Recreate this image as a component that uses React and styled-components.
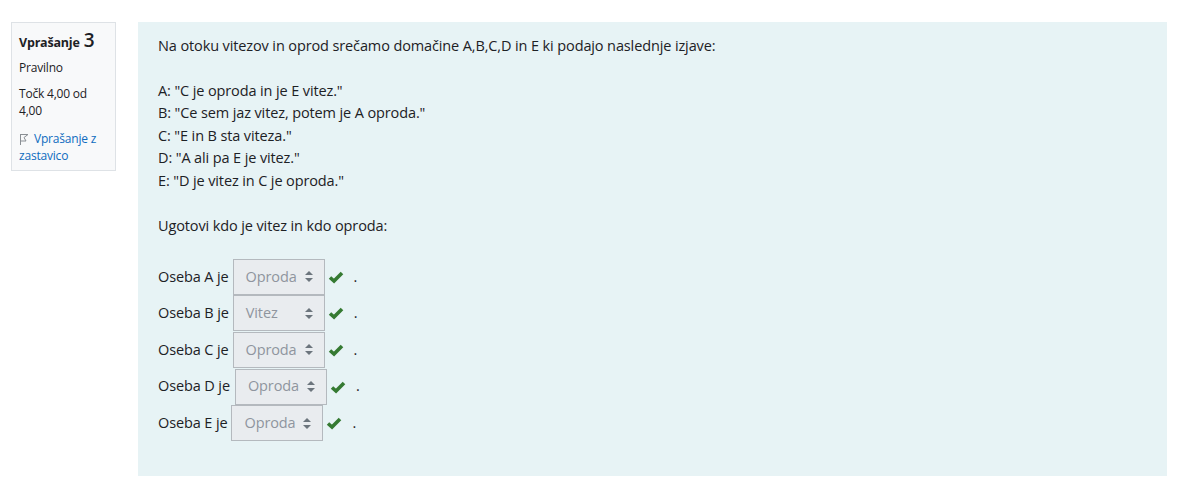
import React from "react";
import styled, { createGlobalStyle } from "styled-components";

const GlobalStyle = createGlobalStyle`
  body {
    margin: 0;
    background: #fff;
    font-family: "Open Sans", "Noto Sans", sans-serif;
    color: #1d2125;
  }
`;

const Page = styled.div`
  display: flex;
  align-items: flex-start;
  gap: 22px;
  padding: 22px 12px 15px 11px;
`;

const Info = styled.div`
  width: 105px;
  box-sizing: border-box;
  flex-shrink: 0;
  background: #f8f9fa;
  border: 1px solid #dee2e6;
  padding: 7px 7px 6px 7px;
  font-size: 12px;
  line-height: 17px;
  letter-spacing: -0.2px;
`;

const Title = styled.h3`
  margin: 0 0 6px;
  font-size: 12.5px;
  font-weight: 700;
  line-height: 20px;
  span {
    font-size: 19px;
    font-weight: 600;
    margin-left: 1px;
  }
`;

const InfoLine = styled.div`
  margin-bottom: 9px;
`;

const FlagLink = styled.a`
  display: block;
  margin-top: 11px;
  color: #0f6cbf;
  text-decoration: none;
  svg {
    vertical-align: -2px;
    margin-right: 5px;
  }
`;

const Formulation = styled.div`
  flex: 1;
  background: #e7f3f5;
  padding: 13px 20px 35px;
  font-size: 14.5px;
  line-height: 22.5px;
  letter-spacing: -0.12px;
  box-sizing: border-box;
`;

const Para = styled.p`
  margin: 0 0 ${(p) => p.after}px;
`;

const Answers = styled.div`
  margin-top: 21px;
`;

const Row = styled.div`
  display: flex;
  align-items: center;
  height: 36.6px;
`;

const Label = styled.span`
  margin-right: ${(p) => p.gap}px;
`;

const Select = styled.div`
  box-sizing: border-box;
  width: 92px;
  height: 36px;
  display: flex;
  align-items: center;
  justify-content: space-between;
  padding: 0 11px 0 12px;
  background: #e9ecef;
  border: 1px solid #b4b9be;
  color: #8f959e;
`;

const Check = styled.svg`
  margin: 0 10px 0 3px;
`;

const Arrows = () => (
  <svg width="8" height="11" viewBox="0 0 8 11">
    <path d="M4 0 L8 4 H0 Z M4 11 L8 7 H0 Z" fill="#6c757d" />
  </svg>
);

const rows = [
  { who: "A", value: "Oproda", gap: 4 },
  { who: "B", value: "Vitez", gap: 4 },
  { who: "C", value: "Oproda", gap: 4 },
  { who: "D", value: "Oproda", gap: 5 },
  { who: "E", value: "Oproda", gap: 4 },
];

export default function App() {
  return (
    <>
      <GlobalStyle />
      <Page>
        <Info>
          <Title>
            Vprašanje <span>3</span>
          </Title>
          <InfoLine>Pravilno</InfoLine>
          <InfoLine>Točk 4,00 od 4,00</InfoLine>
          <FlagLink href="#">
            <svg width="10" height="12" viewBox="0 0 10 12">
              <path
                d="M1.5 12 V1 M1.5 1.5 L9 1.5 L5 4.5 L7 8 L1.5 8"
                fill="none"
                stroke="#8a8f94"
                strokeWidth="1"
                strokeLinejoin="round"
              />
            </svg>
            Vprašanje z zastavico
          </FlagLink>
        </Info>
        <Formulation>
          <Para after={22}>
            Na otoku vitezov in oprod srečamo domačine A,B,C,D in E ki podajo
            naslednje izjave:
          </Para>
          <Para after={23}>
            A: "C je oproda in je E vitez."
            <br />
            B: "Ce sem jaz vitez, potem je A oproda."
            <br />
            C: "E in B sta viteza."
            <br />
            D: "A ali pa E je vitez."
            <br />
            E: "D je vitez in C je oproda."
          </Para>
          <Para after={0}>Ugotovi kdo je vitez in kdo oproda:</Para>
          <Answers>
            {rows.map((r) => (
              <Row key={r.who}>
                <Label gap={r.gap}>Oseba {r.who} je</Label>
                <Select>
                  {r.value}
                  <Arrows />
                </Select>
                <Check width="16" height="14" viewBox="0 0 16 14">
                  <path
                    d="M2 7.5 L6 11 L14 3"
                    fill="none"
                    stroke="#357a32"
                    strokeWidth="3.6"
                  />
                </Check>
                <span>.</span>
              </Row>
            ))}
          </Answers>
        </Formulation>
      </Page>
    </>
  );
}
